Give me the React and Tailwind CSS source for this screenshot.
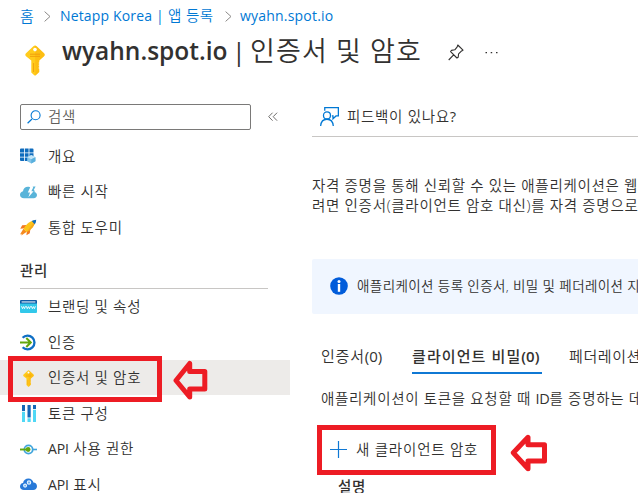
import React from 'react';

function GridIcon() {
  return (
    <svg width="17" height="17" viewBox="0 0 17 17">
      <path d="M0 1.5Q0 .5 1 .5H4V4.5H0zM4.8 .5H8.6V4.5H4.8zM9.4 .5H12.5Q13.5 .5 13.5 1.5V4.5H9.4zM0 5.2H4V8.8H0zM4.8 5.2H8.6V8.8H4.8zM9.4 5.2H13.5V8.8H9.4zM0 9.5H4V13H1Q0 13 0 12zM4.8 9.5H8.6V13H4.8z" fill="#0f6cbd" />
      <path d="M7.2 9.2 11.3 7 15.4 9.2V13.2L11.3 15.6 7.2 13.2z" fill="#83c3e8" />
      <path d="M7.2 9.2 11.3 7 15.4 9.2 11.3 11.3z" fill="#c3e5f7" />
      <path d="M11.3 11.3 15.4 9.2V13.2L11.3 15.6z" fill="#59b0dd" />
    </svg>
  );
}

function CloudBoltIcon() {
  return (
    <svg width="17" height="17" viewBox="0 0 17 17">
      <path d="M4 14.2C1.6 14.2 0 12.7 0 10.7 0 8.8 1.3 7.5 3 7.2 3.2 4.5 5.2 2.7 7.9 2.7 8.8 2.7 10.4 3 11.5 4.6L14.6 6.6C14.2 7.4 14 7.7 14 8 15.8 8.2 17 9.4 17 11.1 17 13 15.6 14.2 13.7 14.2z" fill="#59b4d9" />
      <path d="M12.6 2.5H15.6L13.6 6.2 15 8H12z" fill="#59b4d9" />
      <path d="M10.6 2.6 7.8 8.6H10L8.4 13.3 13.6 7.2H11.4L13.4 2.6z" fill="#fff" />
    </svg>
  );
}

function RocketIcon() {
  return (
    <svg width="18" height="17" viewBox="0 0 18 17">
      <path d="M7 5.8 2.3 6.2 0.3 9.8 5 9.3zM11 10.2 10.4 14.5 6.8 16.8 7.3 12z" fill="#f27a21" />
      <path d="M3.6 9.8 0 15.8 1.8 15.2 1.4 17 7.2 13z" fill="#f58a1f" />
      <path d="M16.6.8C11.2 1.2 6.4 4.5 3.8 10L7 13.2C12.3 10.8 15.8 6.2 16.6.8z" fill="#fcc419" />
      <path d="M16.6.8 7 13.2C12.3 10.8 15.8 6.2 16.6.8z" fill="#f7a81b" />
      <path d="M17.2.2C15.3.3 13.6.8 12.3 1.6L15.7 5C16.6 3.6 17.1 2 17.2.2z" fill="#0f6cbd" />
    </svg>
  );
}

function WwwIcon() {
  return (
    <svg width="17" height="14" viewBox="0 0 17 14">
      <path d="M0 2.5H17V12Q17 13 16 13H1Q0 13 0 12z" fill="#32c8ea" />
      <path d="M0 3.5V1Q0 0 1 0H16Q17 0 17 1V3.5z" fill="#0f5ba5" />
      <path d="M1.6 1.4H15.4V2.5H1.6z" fill="#e6f3fb" />
      <path d="M1.5 6.2 2.5 8.7 3.5 6.6 4.5 8.7 5.5 6.2M6.3 6.2 7.3 8.7 8.4 6.6 9.5 8.7 10.5 6.2M11.4 6.2 12.4 8.7 13.4 6.6 14.4 8.7 15.4 6.2" fill="none" stroke="#fff" strokeWidth=".9" />
    </svg>
  );
}

function AuthIcon() {
  return (
    <svg width="17" height="17" viewBox="0 0 17 17">
      <path d="M2.6 3.7A6.9 6.9 0 1 1 2.6 13.3" fill="none" stroke="#0f6fc5" strokeWidth="2.3" />
      <path d="M0 8.5H10.3M6.3 4 10.8 8.5 6.3 13" fill="none" stroke="#62a70f" strokeWidth="2" />
    </svg>
  );
}

function KeyIcon({ width, height }) {
  return (
    <svg width={width} height={height} viewBox="0 0 20 31">
      <path d="M8.4 1.2Q10 0 11.6 1.2L19 8.2Q20.4 9.8 19 11.3L14.2 15.5V17L13.2 18 14.2 19 13.2 20.3 14.2 21.5 13.2 23 14.2 24.2V27L11 30Q10 31 9 30L6.3 27.4V15.5L1 11.3Q-.4 9.8 1 8.2z" fill="#ffcb1c" />
      <path d="M10 .7Q10.8.6 11.6 1.2L19 8.2Q20.4 9.8 19 11.3L14.2 15.5V27L10.5 30.4z" fill="#fbb208" opacity=".5" />
      <path d="M5 9.2H15M5 11.4H15M8.6 18V27" stroke="#f09c0c" strokeWidth=".9" />
      <circle cx="10" cy="4.6" r="1.8" fill="#fff" />
    </svg>
  );
}

function TokenIcon() {
  return (
    <svg width="14" height="17" viewBox="0 0 14 17">
      <path d="M0 0H3V6H0zM5.5 0H8.7V12.5H5.5zM11 0H14V4H11z" fill="#1468b8" />
      <path d="M0 6.8H3V17H0zM5.5 13.3H8.7V17H5.5zM11 4.8H14V17H11z" fill="#50d8f5" />
    </svg>
  );
}

function ApiPermIcon() {
  return (
    <svg width="17" height="11" viewBox="0 0 17 11">
      <circle cx="8.5" cy="5.5" r="4.2" fill="none" stroke="#41a5dc" strokeWidth="1.8" />
      <path d="M12.7 5.5H17" stroke="#41a5dc" strokeWidth="1.6" />
      <path d="M0 5.5H7" stroke="#62a70f" strokeWidth="1.9" />
      <circle cx="8.1" cy="5.5" r="2.4" fill="#62a70f" />
    </svg>
  );
}

function CloudGearIcon() {
  return (
    <svg width="17" height="13" viewBox="0 0 17 13">
      <path d="M4 12C1.6 12 0 10.5 0 8.4 0 6.5 1.4 5.1 3.1 4.9 3.4 2 5.8.4 8.4.4 11 .4 13 2 13.4 4.6 15.5 4.7 17 6.1 17 8.2 17 10.5 15.4 12 13.2 12z" fill="#2779d8" />
      <circle cx="9" cy="4.6" r="1.7" fill="#72b4f0" stroke="#e3f2ff" strokeWidth="1.1" />
      <circle cx="5.1" cy="7.6" r="1.5" fill="#72b4f0" stroke="#e3f2ff" strokeWidth="1.1" />
    </svg>
  );
}

function Chevron() {
  return (
    <svg width="7" height="11" viewBox="0 0 7 11" className="shrink-0">
      <path d="M.6.6 6 5.5.6 10.4" fill="none" stroke="#8a8886" strokeWidth="1" />
    </svg>
  );
}

function NavItem({ icon, label, active = false }) {
  return (
    <div className={`flex h-[35.5px] items-center pl-5 pt-[1.5px] ${active ? 'bg-[#edebe9]' : ''}`}>
      <span className="flex w-[17px] shrink-0 justify-center">{icon}</span>
      <span className="ml-[11px]">{label}</span>
    </div>
  );
}

export default function App() {
  return (
    <div className="relative h-[493px] w-[638px] overflow-hidden whitespace-nowrap bg-white font-['Open_Sans','Noto_Sans_CJK_KR',sans-serif] text-[14.5px] font-[350] leading-5 tracking-[0.7px] text-[#323130]">
      <header className="h-[104px]">
        <nav className="flex h-8 items-center pl-5 text-[14px] tracking-[0.1px] text-[#0078d4]">
          <span className="w-[15px] text-[15px]">홈</span>
          <span className="ml-[9px] flex"><Chevron /></span>
          <span className="ml-[9px] w-[156px] tracking-[0.5px]"><span className="font-normal tracking-[0.15px]">Netapp Korea |</span> <span className="text-[14.5px]">앱 등록</span></span>
          <span className="ml-[9px] flex"><Chevron /></span>
          <span className="ml-2 font-normal tracking-[0.2px]">wyahn.spot.io</span>
        </nav>
        <div className="flex h-[42px] items-center pl-[25px]">
          <span className="mt-[14px] w-[37px]"><KeyIcon width={20} height={31} /></span>
          <h1 className="-mt-[5px] flex w-[386px] items-center text-[25px] leading-9 tracking-normal">
            <span className="w-[170px] text-[24.5px] font-semibold">wyahn.spot.io</span>
            <span className="w-[18px] font-normal">|</span>
            <span className="text-[27px] tracking-[1.1px]">인증서 및 암호</span>
          </h1>
          <svg width="16" height="17" viewBox="0 0 16 17" className="-mt-px">
            <path d="M9.8 1 15 6.2 13.6 6.9 10.6 9.8 10.2 13.2 8.9 14 2.6 7.6 3.5 6.4 6.8 5.8 9.2 2.8zM5.6 10.9.7 16" fill="none" stroke="#323130" strokeWidth="1.1" strokeLinejoin="round" />
          </svg>
          <svg width="13" height="3" viewBox="0 0 13 3" className="-mt-px ml-[21px]">
            <path d="M.5 1H2V2.3H.5zM5.7 1H7.2V2.3H5.7zM11 1H12.5V2.3H11z" fill="#323130" />
          </svg>
        </div>
      </header>

      <div className="flex">
        <aside className="w-[290px] shrink-0">
          <div className="flex h-[34px] items-start pl-5">
            <div className="flex h-[26px] w-[231px] items-center rounded-[2px] border border-[#7a7978] pb-px pl-[6px] text-[#605e5c]">
              <svg width="14" height="14" viewBox="0 0 14 14">
                <path d="M5 9 .6 13.3" stroke="#0078d4" strokeWidth="1.2" />
                <circle cx="8.6" cy="5.2" r="4.5" fill="none" stroke="#0078d4" strokeWidth="1.1" />
              </svg>
              <span className="ml-[7px]">검색</span>
            </div>
            <svg width="10" height="10" viewBox="0 0 10 10" className="ml-[17px] mt-[8px]">
              <path d="M4.6.7.7 4.7 4.6 8.7M9.1.7 5.2 4.7 9.1 8.7" fill="none" stroke="#605e5c" strokeWidth=".9" />
            </svg>
          </div>
          <NavItem icon={<GridIcon />} label="개요" />
          <NavItem icon={<CloudBoltIcon />} label="빠른 시작" />
          <NavItem icon={<RocketIcon />} label="통합 도우미" />
          <div className="ml-5 mt-[14px] flex h-[30px] w-[248px] items-center border-b border-[#c8c6c4] pb-[5px] font-medium">관리</div>
          <div>
            <NavItem icon={<WwwIcon />} label="브랜딩 및 속성" />
            <NavItem icon={<AuthIcon />} label="인증" />
            <NavItem icon={<KeyIcon width={11} height={17} />} label="인증서 및 암호" active />
            <NavItem icon={<TokenIcon />} label="토큰 구성" />
            <NavItem icon={<ApiPermIcon />} label={<><span className="text-[14px] font-normal tracking-[-0.1px]">API</span> 사용 권한</>} />
            <NavItem icon={<CloudGearIcon />} label={<><span className="text-[14px] font-normal tracking-[-0.1px]">API</span> 표시</>} />
          </div>
        </aside>

        <main className="ml-[22px] w-[326px] shrink-0 overflow-hidden">
          <div className="flex h-[33px] items-center border-b border-[#c8c6c4] pb-[7px] pl-2">
            <svg width="19" height="19" viewBox="0 0 18 18">
              <path d="M4.5 3.5V.6H17.4V8.5H15.2L12.3 11.2V8.5H11.2" fill="none" stroke="#0078d4" strokeWidth="1.2" />
              <circle cx="6.6" cy="8" r="3.3" fill="none" stroke="#0078d4" strokeWidth="1.2" />
              <path d="M.6 18C.9 14 3.2 11.6 6.6 11.6S12.3 14 12.6 18" fill="none" stroke="#0078d4" strokeWidth="1.2" />
            </svg>
            <span className="ml-[8px]">피드백이 있나요<span className="font-normal">?</span></span>
          </div>

          <div className="mt-[39px]">
            <p>자격 증명을 통해 신뢰할 수 있는 애플리케이션은 웹</p>
            <p>려면 인증서(클라이언트 암호 대신)를 자격 증명으로</p>
          </div>

          <div className="mt-[43px] flex h-[55px] items-center rounded-l-[2px] bg-[#f0f6ff] pl-[18px] text-[13.5px] tracking-[0.4px]">
            <svg width="18" height="18" viewBox="0 0 18 18" className="-mt-px shrink-0">
              <circle cx="9" cy="9" r="8.8" fill="#015cda" />
              <circle cx="9" cy="4.4" r="1.5" fill="#fff" />
              <path d="M7.8 7H10.2V14.8H7.8z" fill="#fff" />
            </svg>
            <span className="-mt-px ml-[9px]">애플리케이션 등록 인증서, 비밀 및 페더레이션 지</span>
          </div>

          <div className="mt-[29px] flex h-[31px] items-stretch pl-[9px] text-[15px] tracking-[0.6px]">
            <span className="w-[91px] shrink-0 pt-[3px] tracking-[0.8px]">인증서<span className="font-normal tracking-normal">(0)</span></span>
            <span className="w-[130px] shrink-0 border-b-2 border-[#0f78d4] pt-[3px] font-medium tracking-[1.1px]">클라이언트 비밀<span className="text-[15px] font-semibold tracking-normal">(0)</span></span>
            <span className="ml-[27px] shrink-0 pt-[3px]">페더레이션</span>
          </div>

          <p className="mt-[15px] pl-[9px]">애플리케이션이 토큰을 요청할 때 <span className="font-normal tracking-[-0.2px]">ID</span>를 증명하는 데</p>

          <div className="mt-[16px] flex h-[50px] items-center">
            <div className="ml-[5px] flex h-[50px] w-[179px] items-center border-[5px] border-[#ed1c24] pb-px pl-[8px]">
              <svg width="17" height="17" viewBox="0 0 17 17">
                <path d="M8.5 0V17M0 8.5H17" stroke="#0f78d4" strokeWidth="1.2" />
              </svg>
              <span className="ml-[9px] tracking-[0.8px]">새 클라이언트 암호</span>
            </div>
            <svg width="37" height="38" viewBox="0 0 37 38" className="ml-[14px] mt-[5px]">
              <path d="M3.3 18.8 18 3.3V10.7H34.5V27H18V34.7z" fill="none" stroke="#ed1c24" strokeWidth="5" strokeLinejoin="round" />
            </svg>
          </div>
          <div className="mt-[2px] pl-[26px] font-medium">설명</div>
        </main>
      </div>

      <div className="absolute left-2 top-[356px] h-[46px] w-[154px] border-[5px] border-[#ed1c24]" />
      <svg width="35" height="41" viewBox="0 0 35 41" className="absolute left-[173px] top-[360px]">
        <path d="M3 20.5 16.7 3.5V11.5H31.8V29H16.7V37z" fill="none" stroke="#ed1c24" strokeWidth="5" strokeLinejoin="round" />
      </svg>
    </div>
  );
}
